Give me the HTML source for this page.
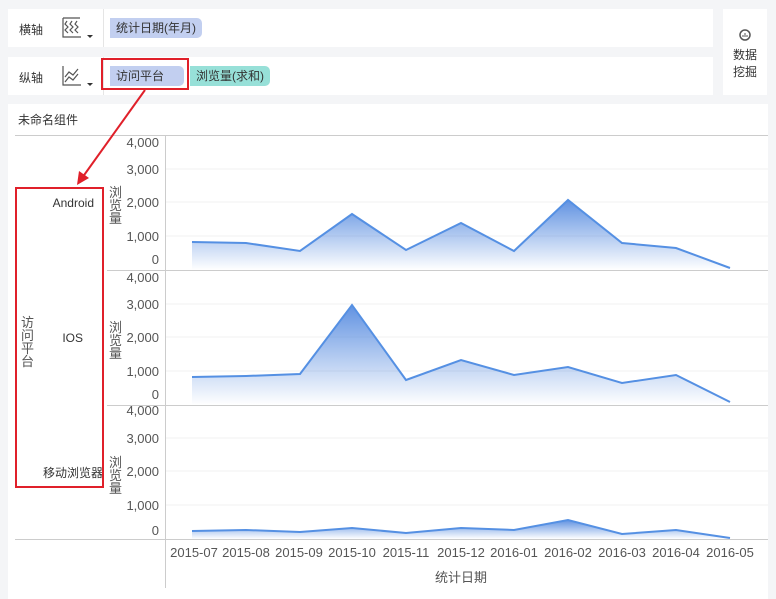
<!DOCTYPE html><html><head><meta charset="utf-8"><style>
body{margin:0;width:776px;height:599px;background:#f4f5f7;font-family:"Liberation Sans","Noto Sans CJK SC",sans-serif;position:relative;overflow:hidden;font-size:12px;color:#333}
.p{position:absolute;background:#fff}
.t{position:absolute;white-space:nowrap}
.pill{position:absolute;height:20px;line-height:20px;padding:0 6px;border-radius:0 5px 5px 0;font-size:12px;color:#333}
</style></head><body>
<div class="p" style="left:8px;top:9px;width:705px;height:38px"></div>
<div class="p" style="left:8px;top:57px;width:705px;height:38px"></div>
<div class="p" style="left:723px;top:9px;width:44px;height:86px"></div>
<div class="p" style="left:8px;top:104px;width:760px;height:495px"></div>
<div class="t" style="left:19px;top:21px">横轴</div>
<div class="t" style="left:19px;top:69px">纵轴</div>
<div style="position:absolute;left:103px;top:9px;width:1px;height:38px;background:#e5e5e5"></div>
<div style="position:absolute;left:103px;top:57px;width:1px;height:38px;background:#e5e5e5"></div>
<svg style="position:absolute;left:60px;top:15px" width="36" height="28"><g fill="none" stroke="#555" stroke-width="1.2"><path d="M3 3V22H21M3 3H20M7 6l-2 3 3 3-3 3 3 3M12 6l-2 3 3 3-3 3 3 3M17 6l-2 3 3 3-3 3 3 3"/></g><path d="M27 20h6l-3 3z" fill="#333"/></svg>
<svg style="position:absolute;left:60px;top:63px" width="36" height="28"><g fill="none" stroke="#555" stroke-width="1.2"><path d="M3 3V22H21M5 14l4-5 4 3 5-6M5 19l4-5 4 3 5-6"/></g><path d="M27 20h6l-3 3z" fill="#333"/></svg>
<div class="pill" style="left:110px;top:18px;background:#c2cff0">统计日期(年月)</div>
<div class="pill" style="left:110px;top:66px;width:62px;background:#c2cff0">访问平台</div>
<div class="pill" style="left:190px;top:66px;background:#97e0d8">浏览量(求和)</div>
<div style="position:absolute;left:101px;top:58px;width:84px;height:28px;border:2px solid #e0202a"></div>
<svg style="position:absolute;left:738px;top:28px" width="14" height="14"><circle cx="7" cy="7" r="5" fill="none" stroke="#555" stroke-width="1.5"/><path d="M5 9V7M7 9V5M9 9V7" stroke="#555"/></svg>
<div class="t" style="left:733px;top:47px;line-height:17px">数据<br>挖掘</div>
<div class="t" style="left:18px;top:111px">未命名组件</div>
<svg style="position:absolute;left:0;top:0" width="776" height="599" font-family="Liberation Sans,Noto Sans CJK SC,sans-serif" font-size="13" fill="#555">
<defs><linearGradient id="g" x1="0" y1="0" x2="0" y2="1"><stop offset="0" stop-color="#4f86de" stop-opacity=".9"/><stop offset="1" stop-color="#4f86de" stop-opacity="0"/></linearGradient></defs>
<g stroke="#f0f0f0"><path d="M166 169H768M166 202H768M166 236H768M166 304H768M166 337H768M166 371H768M166 438H768M166 471H768M166 505H768"/></g>
<g stroke="#ccc" fill="none"><path d="M15 135.5H768M165.5 135V588M107 270.5H768M107 405.5H768M15 539.5H768"/></g>
<g fill="url(#g)">
<path d="M192 242L246 243L300 251L352 214L406 250L461 223L514 251L568 200L622 243L676 248L730 268V270H192Z"/>
<path d="M192 377L246 376L300 374L352 305L406 380L461 360L514 375L568 367L622 383L676 375L730 402V405H192Z"/>
<path d="M192 531L246 530L300 532L352 528L406 533L461 528L514 530L568 520L622 534L676 530L730 538V539H192Z"/>
</g>
<g fill="none" stroke="#5590e3" stroke-width="2">
<path d="M192 242L246 243L300 251L352 214L406 250L461 223L514 251L568 200L622 243L676 248L730 268"/>
<path d="M192 377L246 376L300 374L352 305L406 380L461 360L514 375L568 367L622 383L676 375L730 402"/>
<path d="M192 531L246 530L300 532L352 528L406 533L461 528L514 530L568 520L622 534L676 530L730 538"/>
</g>
<g text-anchor="end"><text x="159" y="147">4,000</text><text x="159" y="174">3,000</text><text x="159" y="207">2,000</text><text x="159" y="241">1,000</text><text x="159" y="264">0</text>
<text x="159" y="282">4,000</text><text x="159" y="309">3,000</text><text x="159" y="342">2,000</text><text x="159" y="376">1,000</text><text x="159" y="399">0</text>
<text x="159" y="415">4,000</text><text x="159" y="443">3,000</text><text x="159" y="476">2,000</text><text x="159" y="510">1,000</text><text x="159" y="535">0</text>
<text x="94" y="207" font-size="12" fill="#333">Android</text><text x="83" y="342" font-size="12" fill="#333">IOS</text><text x="103" y="477" font-size="12" fill="#333">移动浏览器</text></g>
<g><text x="109" y="197">浏</text><text x="109" y="210">览</text><text x="109" y="223">量</text>
<text x="109" y="332">浏</text><text x="109" y="345">览</text><text x="109" y="358">量</text>
<text x="109" y="467">浏</text><text x="109" y="480">览</text><text x="109" y="493">量</text>
<text x="21" y="327">访</text><text x="21" y="340">问</text><text x="21" y="353">平</text><text x="21" y="366">台</text></g>
<g text-anchor="middle"><text x="194" y="557">2015-07</text><text x="246" y="557">2015-08</text><text x="299" y="557">2015-09</text><text x="352" y="557">2015-10</text><text x="406" y="557">2015-11</text><text x="461" y="557">2015-12</text><text x="514" y="557">2016-01</text><text x="568" y="557">2016-02</text><text x="622" y="557">2016-03</text><text x="676" y="557">2016-04</text><text x="730" y="557">2016-05</text><text x="461" y="582">统计日期</text></g>
<rect x="16" y="188" width="87" height="299" fill="none" stroke="#e0202a" stroke-width="2"/>
<path d="M145 90L82 178" stroke="#e0202a" stroke-width="2"/><path d="M77 185L79 171L89 178Z" fill="#e0202a"/>
</svg>
</body></html>
